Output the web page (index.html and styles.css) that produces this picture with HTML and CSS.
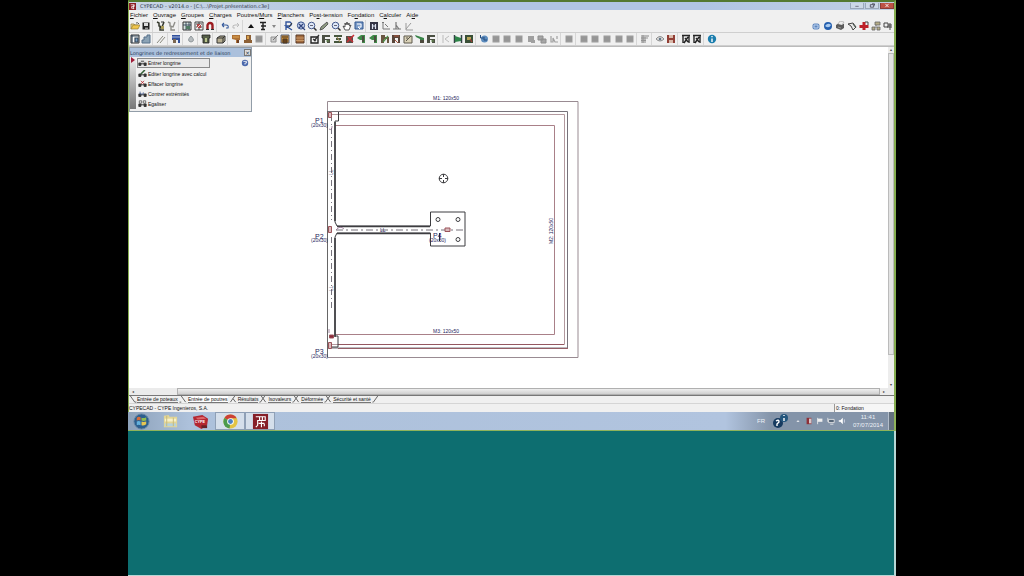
FILE: index.html
```html
<!DOCTYPE html>
<html lang="fr">
<head>
<meta charset="utf-8">
<title>CYPECAD</title>
<link rel="stylesheet" href="styles.css">
</head>
<body>
<svg class="defs" aria-hidden="true">
  <symbol id="open" viewBox="0 0 10 10"><path d="M1 8V3h3l1 1h3v1" fill="#f3dc8a" stroke="#8a7430" stroke-width=".7"/><path d="M1 8l2-4h7L8 8z" fill="#efc54c" stroke="#86702c" stroke-width=".6"/><path d="M6 2q2-1 3 1" fill="none" stroke="#555"/></symbol>
  <symbol id="save" viewBox="0 0 10 10"><path d="M1.500 1.500h7v7h-7z" fill="#222"/><path d="M3 2h4v3H3z" fill="#ddd"/><path d="M4 6.500h3v2H4z" fill="#999"/></symbol>
  <symbol id="plant" viewBox="0 0 10 10"><path d="M1 1l2 1v3l3 1 2-5M4 5v4h4" fill="none" stroke="#34382c" stroke-width="1.500"/><path d="M5 5h3v3H5z" fill="#a89a56"/><path d="M5 1h3" stroke="#333"/></symbol>
  <symbol id="plant2" viewBox="0 0 10 10"><path d="M1 1l2 1v3l3 1 2-5M4 5v4h4" fill="none" stroke="#8d8d88" stroke-width="1.400"/></symbol>
  <symbol id="grid" viewBox="0 0 10 10"><path d="M1 1h8v8H1z" fill="#d8e4e0" stroke="#333"/><path d="M1 4h8M4 1v8M7 1v8" stroke="#345" stroke-width=".9"/><path d="M4 5h4v3H4z" fill="#507c64"/></symbol>
  <symbol id="gridred" viewBox="0 0 10 10"><path d="M1 1h8v8H1z" fill="#eee" stroke="#444"/><path d="M2 3h6M2 6h6M5 1v8" stroke="#444"/><path d="M3 3h4v4H3z" fill="#b04444"/><path d="M3 7l4-4" stroke="#fff" stroke-width=".8"/></symbol>
  <symbol id="magnet" viewBox="0 0 10 10"><path d="M2.500 9V4.500a2.500 2.500 0 015 0V9" fill="none" stroke="#9c1c20" stroke-width="2.400"/><path d="M1 8.500h3M6 8.500h3" stroke="#333" stroke-width="1.200"/></symbol>
  <symbol id="undo" viewBox="0 0 10 10"><path d="M2 4h4q3 0 2 3H6M2 4l2-2M2 4l2 2" fill="none" stroke="#355a9c" stroke-width="1.100"/></symbol>
  <symbol id="redo" viewBox="0 0 10 10"><path d="M8 4H4Q1 4 2 7h2M8 4L6 2M8 4L6 6" fill="none" stroke="#bbb"/></symbol>
  <symbol id="up" viewBox="0 0 10 10"><path d="M2 7l3-4 3 4z" fill="#111"/></symbol>
  <symbol id="levels" viewBox="0 0 10 10"><path d="M2 1.500h6M3 5h5M3 8.500h4M5 1v8" stroke="#222" stroke-width="1.400"/></symbol>
  <symbol id="down" viewBox="0 0 10 10"><path d="M3 4h4L5 7z" fill="#888"/></symbol>
  <symbol id="zoomr" viewBox="0 0 10 10"><path d="M2 9V1h4q3 2 0 4H2l6 4" fill="none" stroke="#34569c" stroke-width="1.400"/><path d="M5 6l3-4" stroke="#333"/></symbol>
  <symbol id="zoom" viewBox="0 0 10 10"><circle cx="4.500" cy="4.500" r="3.300" fill="#dfe8f8" stroke="#44598c"/><path d="M7 7l2.500 2.500" stroke="#333" stroke-width="1.500"/><path d="M3 4.500h3" stroke="#667"/></symbol>
  <symbol id="zoomx" viewBox="0 0 10 10"><circle cx="5" cy="4.500" r="3.600" fill="#c8d5ef" stroke="#35508c"/><path d="M3 3l4 4M7 3L3 7M7 7l2 2" stroke="#33457c" stroke-width="1.200"/></symbol>
  <symbol id="pencil" viewBox="0 0 10 10"><path d="M1 9l1-3 6-5 1 2-5 5z" fill="#8f9c83" stroke="#444" stroke-width=".8"/></symbol>
  <symbol id="hand" viewBox="0 0 10 10"><path d="M3 9L1 5l2 1V2l1 2 1-3 1 3 1-2 .5 3L9 4 7 9z" fill="#fff" stroke="#333" stroke-width=".8"/></symbol>
  <symbol id="refresh" viewBox="0 0 10 10"><path d="M1 1h8v7H1z" fill="#7c9cc8" stroke="#31578f"/><path d="M3 3h4v3H4l2 2" fill="none" stroke="#fff"/></symbol>
  <symbol id="binoc" viewBox="0 0 10 10"><path d="M1 1h8v8H1z" fill="#334"/><path d="M3.500 3v5M6.500 3v5M3 5h4" stroke="#dfe4f2" stroke-width="1.200"/></symbol>
  <symbol id="axis" viewBox="0 0 10 10"><path d="M2 1v7h7M4 3l3 3M1 2l1-1 1 1" fill="none" stroke="#777"/></symbol>
  <symbol id="angle" viewBox="0 0 10 10"><path d="M1 8h8M4 1v7M4 4l3 4" fill="none" stroke="#777" stroke-width="1.200"/></symbol>
  <symbol id="diag" viewBox="0 0 10 10"><path d="M2 2v7h7M2 8l5-6" fill="none" stroke="#999"/></symbol>
  <symbol id="mail" viewBox="0 0 10 10"><rect x="1.500" y="2.500" width="7" height="6" rx="2" fill="#5f86bd"/><path d="M3 4h4v3H3z" fill="none" stroke="#bcd3f1"/></symbol>
  <symbol id="globe" viewBox="0 0 10 10"><circle cx="5" cy="5" r="4" fill="#245fae"/><path d="M2 5q3-4 6-1Q6 8 2 5" fill="#a9cbf0"/></symbol>
  <symbol id="print" viewBox="0 0 10 10"><path d="M1 4l3-2 5 1v4L6 9 1 7z" fill="#5c5c5c"/><path d="M3 3l2-3 4 1-2 3M3 6l3 1" fill="#eee" stroke="#aaa" stroke-width=".7"/></symbol>
  <symbol id="page" viewBox="0 0 10 10"><path d="M1 3l5-1 3 4-3 3-2-4z" fill="#e8e8e8" stroke="#444"/><path d="M6 3l3 4" stroke="#3e4e44"/></symbol>
  <symbol id="cross" viewBox="0 0 10 10"><path d="M3.500 1h3v3h3v3h-3v2h-3V7h-3V4h3z" fill="#bd2028"/><path d="M6 1h3v3" stroke="#444" fill="none"/></symbol>
  <symbol id="network" viewBox="0 0 10 10"><path d="M4 1h5v3H4zM1 6h3v3H1zM6 6h3v3H6zM5 4v3" fill="#b6ad86" stroke="#666" stroke-width=".8"/></symbol>
  <symbol id="windows" viewBox="0 0 10 10"><path d="M1 2h4v4H1zM4 6h5M7 2v7M5 4h4" fill="#eee" stroke="#444"/></symbol>
  <symbol id="table" viewBox="0 0 10 10"><path d="M1 1h8v8H1z" fill="#fff" stroke="#333"/><path d="M1 2h8M2 1v8M5 4h3v4H5z" fill="#7ba0c4" stroke="#345" stroke-width="1.200"/></symbol>
  <symbol id="stair" viewBox="0 0 10 10"><path d="M1 9V6h2V3h3V1h3v8z" fill="#8ba3b6" stroke="#56708a"/></symbol>
  <symbol id="line" viewBox="0 0 10 10"><path d="M1 9l6-7M4 9l5-6" stroke="#8b8b80"/></symbol>
  <symbol id="blue" viewBox="0 0 10 10"><path d="M1 1h8v8H7V6H1z" fill="#31509c"/><path d="M1 3h8" stroke="#c5d3ee" stroke-width=".8"/><path d="M2 5h3v4H2z" fill="#7b6750"/></symbol>
  <symbol id="drop" viewBox="0 0 10 10"><path d="M5 2q5 5 0 6-5-1 0-6" fill="#b7bcbf" stroke="#828a8e" stroke-width=".8"/></symbol>
  <symbol id="tee" viewBox="0 0 10 10"><path d="M1 1h8v3H8v5H2V4H1z" fill="#565f49" stroke="#222" stroke-width=".8"/><path d="M4 4h2v4H4z" fill="#b9c48b"/></symbol>
  <symbol id="cube" viewBox="0 0 10 10"><path d="M1 4l3-2h5v5L7 9H1z" fill="#b6ae91" stroke="#333"/><path d="M1 4h6v5M7 4l2-2" fill="none" stroke="#333"/></symbol>
  <symbol id="brown" viewBox="0 0 10 10"><path d="M1 1h8v5H7v3H5V6L1 5z" fill="#ad7134"/><path d="M2 3h6" stroke="#e1a852"/><path d="M6 6h2v3H6z" fill="#6b3c20"/></symbol>
  <symbol id="footing" viewBox="0 0 10 10"><path d="M3 1h5v5h1v3H1V6h2z" fill="#8d6035"/><path d="M4 2h2v3H4z" fill="#d8a24f"/></symbol>
  <symbol id="gray" viewBox="0 0 10 10"><path d="M1.500 1.500h7v7h-7z" fill="#9c9c9c"/><path d="M2 4h6M2 6h6" stroke="#8c8c8c" stroke-width=".6"/></symbol>
  <symbol id="graypen" viewBox="0 0 10 10"><path d="M2 3h5v5H2z" fill="#ccc" stroke="#929292"/><path d="M4 6l5-5" stroke="#777"/></symbol>
  <symbol id="home" viewBox="0 0 10 10"><path d="M1 1h8v8H1z" fill="#c88a36" stroke="#56627c"/><path d="M3 5h4v4H3zM2 3h6" fill="#68431f" stroke="#4d3b25"/></symbol>
  <symbol id="brick" viewBox="0 0 10 10"><path d="M1 1h8v8H1z" fill="#a36b3c" stroke="#5b3d2b"/><path d="M1 4h8M1 6.500h8" stroke="#d1a373" stroke-width=".8"/></symbol>
  <symbol id="cut" viewBox="0 0 10 10"><path d="M1 3h7v6H1z" fill="#f5f5f5" stroke="#222" stroke-width="1.400"/><path d="M4 7l5-6M3 5l3 2" stroke="#333" stroke-width="1.300"/></symbol>
  <symbol id="beam" viewBox="0 0 10 10"><path d="M1 1h8v2H4v2h5v4H6V6H4v3H1z" fill="#4b5043"/><path d="M5 7h3" stroke="#6b9254"/></symbol>
  <symbol id="beam2" viewBox="0 0 10 10"><path d="M1 1h8v2H1zM3 4h5v2H3zM1 7h8v2H1z" fill="#47573e"/><path d="M4 3l3 5" stroke="#a18c52"/></symbol>
  <symbol id="del" viewBox="0 0 10 10"><path d="M1 2h7v7H1z" fill="#585048"/><path d="M2 8l7-7M3 3l5 5" stroke="#c52f35" stroke-width="1.600"/></symbol>
  <symbol id="green" viewBox="0 0 10 10"><path d="M1 4l4-3h4v8H6V6H4z" fill="#3f8a48"/><path d="M6 2h2v6H6z" fill="#4a4f3e"/></symbol>
  <symbol id="greenl" viewBox="0 0 10 10"><path d="M0 1l9 3v2H7v3H5V5L1 3z" fill="#388348"/><path d="M5 6h4v3H5z" fill="#4c493c"/></symbol>
  <symbol id="mix" viewBox="0 0 10 10"><path d="M1 1h4v2h4v6H7V5H4v4H1z" fill="#6a5742"/><path d="M3 8l5-6" stroke="#4d8b47" stroke-width="1.300"/></symbol>
  <symbol id="mixr" viewBox="0 0 10 10"><path d="M1 1h8v8H7V4H4v5H1z" fill="#584539"/><path d="M4 6l3 3M3 2h5" stroke="#b05a43"/></symbol>
  <symbol id="note" viewBox="0 0 10 10"><path d="M1 2h8v7H1z" fill="#d9d1b7" stroke="#5c584c"/><path d="M3 7l5-5M3 4h2" stroke="#5c584c"/></symbol>
  <symbol id="kite" viewBox="0 0 10 10"><path d="M2 1v8M8 2L4 5l4 3" fill="none" stroke="#bcbcbc"/></symbol>
  <symbol id="flagg" viewBox="0 0 10 10"><path d="M1.500 1v8M8.500 1v8" stroke="#344" stroke-width="1.500"/><path d="M2 2l6 2v3L2 8z" fill="#2e8549"/></symbol>
  <symbol id="screen" viewBox="0 0 10 10"><path d="M1 1h8v8H1z" fill="#3a5037"/><path d="M3 3h4v3H3z" fill="#b5a558"/><path d="M6 5l2 3" stroke="#b33"/></symbol>
  <symbol id="back" viewBox="0 0 10 10"><circle cx="5.500" cy="5" r="3.500" fill="#5b8bbd"/><path d="M1.500 1v3h3M5 3v3h3" fill="none" stroke="#274e80"/></symbol>
  <symbol id="gcopy" viewBox="0 0 10 10"><path d="M1 2h5v4H1zM4 5h5v4H4z" fill="#a6a6a6" stroke="#8e8e8e"/></symbol>
  <symbol id="gcorner" viewBox="0 0 10 10"><path d="M2 2h6v4h1v3H5V8H2z" fill="#a0a0a0"/></symbol>
  <symbol id="glist" viewBox="0 0 10 10"><path d="M1 1h8v2H6v6H1z" fill="#bbb"/><path d="M3 1v8M1 4h7M1 6.500h5" stroke="#939393"/></symbol>
  <symbol id="gtext" viewBox="0 0 10 10"><path d="M2 2v6h2V4l2 4h3M8 2v3" fill="none" stroke="#a0a0a0" stroke-width="1.200"/></symbol>
  <symbol id="eye" viewBox="0 0 10 10"><path d="M1 5q4-5 8 0-4 4-8 0z" fill="#e0e0e0" stroke="#8b8b8b"/><circle cx="5" cy="5" r="1.300" fill="#647888"/></symbol>
  <symbol id="redsave" viewBox="0 0 10 10"><path d="M1 1h2v3h4V1h2v8H7V6H3v3H1z" fill="#923f36"/><path d="M3 1h4v3H3zM3 6h4v3H3z" fill="#d9b9aa"/><path d="M1 5h8" stroke="#923f36" stroke-width="2"/></symbol>
  <symbol id="find" viewBox="0 0 10 10"><path d="M1 1.500h8M2 1v8M8 1v8M3 9l4-6M4 4l3 4" fill="none" stroke="#252525" stroke-width="1.400"/></symbol>
  <symbol id="info" viewBox="0 0 10 10"><circle cx="5" cy="5" r="4.200" fill="#1c7eae"/><path d="M5 2v1.300M5 4.500v3.500" stroke="#fff" stroke-width="1.400"/></symbol>
  <symbol id="lg" viewBox="0 0 10 10"><path d="M0 5h3v3H0zM7 5h3v3H7zM3 6h4" fill="#333" stroke="#333" stroke-width="1.200"/></symbol>
</svg>

<div class="desktop">
  <main class="window">
    <header class="titlebar">
      <svg class="appicon" viewBox="0 0 8 8" aria-hidden="true"><path d="M0 0h8v8H0z" fill="#8c1d24"/><path d="M2 2h4v2H3v2h3M5 2v5" fill="none" stroke="#fff" stroke-width=".8"/></svg>
      <h1 class="title">CYPECAD - v2014.o - [C:\...\Projet.présentation.c3e]</h1>
      <div class="winbtns">
        <button class="winbtn" aria-label="Réduire"><svg viewBox="0 0 12 6"><path d="M4 4h4" stroke="#667"/></svg></button>
        <button class="winbtn" aria-label="Restaurer"><svg viewBox="0 0 12 6"><path d="M4 2h4v3H4zM6 1h3v2" fill="none" stroke="#445"/></svg></button>
        <button class="winbtn close" aria-label="Fermer"><svg viewBox="0 0 12 6"><path d="M4 1l4 4M8 1L4 5" stroke="#fff"/></svg></button>
      </div>
    </header>
    <nav class="menu">
      <button><u>F</u>ichier</button><button><u>O</u>uvrage</button><button><u>G</u>roupes</button><button><u>C</u>harges</button><button>Poutres/<u>M</u>urs</button><button><u>P</u>lanchers</button><button>Po<u>s</u>t-tension</button><button>Fo<u>n</u>dation</button><button>C<u>a</u>lculer</button><button>Ai<u>d</u>e</button>
    </nav>
    <div class="toolbar">
      <div class="tools" data-icons="open save|plant plant2|grid gridred magnet|undo redo|up levels down|zoomr zoomx zoom pencil zoom hand refresh|binoc axis angle diag"></div>
      <div class="tools" data-icons="mail globe print page cross network windows"></div>
    </div>
    <div class="toolbar">
      <div class="tools" data-icons="table stair|line|blue|drop|tee|cube|brown footing gray|graypen home|brick|cut beam beam2 del green green mix mixr note greenl beam|kite flagg screen|back gray gray gray gcorner gcopy gtext|gray|gray gray gray gray gray|glist|eye redsave|find find|info"></div>
    </div>

    <section class="workspace">
      <div class="view">
        <svg class="plan" viewBox="129 47 759 341" role="img" aria-label="Plan de fondation">
          <g fill="none" stroke="#998b92">
            <path d="M327.500 357.500v-256h250.500v256z"/>
            <path d="M335 125.500h219.500v209H335" stroke="#a98088"/>
            <path d="M328 111.500h239.500v236.500H328" stroke="#77737b"/>
            <path d="M328 114.500h236.500v230H328" stroke="#b39a9f"/>
          </g>
          <path d="M338 348.500h230M338 344.500h226" stroke="#8b4651" stroke-width=".8"/>
          <g fill="none" stroke="#3d3d40">
            <path d="M327.500 111v246" stroke="#666"/>
            <path d="M338.500 112v9h-3.500v101l2 4H430.500v-14h34.500v34h-34.500v-13H337l-2 4v99h3v11H328"/>
            <path d="M335 122v99M335 238v99" stroke-width="1.600"/>
            <path d="M337 226.500h93M337 233.500h93" stroke-width="1.300"/>
            <path d="M331.500 115v105M331.500 237v72" stroke="#77747e" stroke-dasharray="6 3 1 3"/>
            <path d="M336 230h128" stroke="#76717a" stroke-dasharray="7 3 2 3"/>
            <circle cx="443.500" cy="178.500" r="4.300"/>
            <path d="M443.500 174v3M443.500 180v3M439 178.500h3M445 178.500h3"/>
            <circle cx="438" cy="219.500" r="2"/><circle cx="458" cy="219.500" r="2"/><circle cx="458" cy="239.500" r="2"/>
          </g>
          <g fill="#d9babb" stroke="#9b535a">
            <path d="M328.500 112.500h3v5h-3zM328.500 226.500h3v6h-3zM328.500 342.500h3v6h-3zM445 228h5v3.500h-5z"/>
            <path d="M329.500 335h4v3h-4z" fill="#8d2938"/>
          </g>
          <path d="M336 230q4-5 8-1M329 129q3 2 3-3M329 333v-4" fill="none" stroke="#926e91" stroke-width=".8"/>
          <path d="M439.500 233v8" stroke="#222"/>
          <g class="lbl">
            <text x="433" y="100">M1: 120x50</text>
            <text x="433" y="333">M3: 120x50</text>
            <text transform="translate(553 244) rotate(-90)">M2: 120x50</text>
            <text x="311" y="127">(20x30)</text><text x="311" y="242">(20x30)</text><text x="311" y="358">(20x30)</text>
            <text x="429" y="242">(20x30)</text>
            <text x="380" y="232">LL</text>
            <text transform="translate(333 175) rotate(-90)">LL</text><text transform="translate(333 291) rotate(-90)">LL</text>
          </g>
          <g class="lbl big"><text x="315" y="123">P1</text><text x="315" y="239">P2</text><text x="315" y="354">P3</text><text x="433" y="238">P4</text></g>
        </svg>
        <aside class="palette">
          <h2 class="palhead"><span>Longrines de redressement et de liaison</span><button class="palclose" aria-label="Fermer la palette">×</button></h2>
          <div class="palbody">
            <div class="rail"><svg viewBox="0 0 6 6" aria-hidden="true"><path d="M1 0l4 3-4 3z" fill="#a01c38"/></svg></div>
            <div class="pallist">
              <button class="on"><svg viewBox="0 0 10 10"><use href="#lg"/><path d="M3 2h4v2H3z" fill="#777"/></svg>Entrer longrine</button>
              <button><svg viewBox="0 0 10 10"><use href="#lg"/><path d="M3 5l5-5" stroke="#386339" stroke-width="2"/></svg>Editer longrine avec calcul</button>
              <button><svg viewBox="0 0 10 10"><use href="#lg"/><path d="M3 1l4 4M7 1L3 5" stroke="#b4242c"/></svg>Effacer longrine</button>
              <button><svg viewBox="0 0 10 10"><use href="#lg"/><path d="M2 2v3h4V3" fill="none" stroke="#3c5488"/></svg>Contrer extrémités</button>
              <button><svg viewBox="0 0 10 10"><use href="#lg"/><path d="M1 1h3v3H1zM6 1h3v3H6z" fill="none" stroke="#555"/></svg>Egaliser</button>
            </div>
            <button class="help" aria-label="Aide"><svg viewBox="0 0 10 10"><circle cx="5" cy="5" r="4" fill="#4a68ac"/><path d="M3 3h4v2H5v2" fill="none" stroke="#fff"/></svg></button>
          </div>
        </aside>
      </div>
      <div class="vscroll"><span>▴</span><i></i><span>▾</span></div>
    </section>
    <div class="hscroll"><span>◂</span><i></i><span>▸</span></div>
    <div class="tabs">
      <svg viewBox="0 0 8 8"><path d="M1 0l5 7h2"/></svg>
      <button>Entrée de poteaux</button>
      <svg viewBox="0 0 8 8"><path d="M0 7h2M2 0l5 7"/></svg>
      <button class="on">Entrée de poutres</button>
      <svg viewBox="0 0 8 8"><path d="M1 7l5-7M4 3l3 4"/></svg>
      <button>Résultats</button>
      <svg viewBox="0 0 8 8"><path d="M0 7h1l5-7M2 0l5 7"/></svg>
      <button>Isovaleurs</button>
      <svg viewBox="0 0 8 8"><path d="M0 7h1l5-7M2 0l5 7"/></svg>
      <button>Déformée</button>
      <svg viewBox="0 0 8 8"><path d="M0 7h1l5-7M2 0l5 7"/></svg>
      <button>Sécurité et santé</button>
      <svg viewBox="0 0 8 8"><path d="M0 7h1l5-7"/></svg>
    </div>
    <footer class="status"><span>CYPECAD - CYPE Ingenieros, S.A.</span><span class="level">0: Fondation</span></footer>
  </main>

  <div class="taskbar">
    <button class="task" aria-label="Démarrer"><svg viewBox="0 0 18 18"><circle cx="9" cy="9" r="8" fill="#2c5f8f" stroke="#6687a4"/><path d="M4 5q2-2 4-.500V8q-2-1-4 0z" fill="#d86c38"/><path d="M9 5q2 1 5-.500V8q-3 1-5 0z" fill="#91bd50"/><path d="M4 9q2-1 4 0v4q-2-1-4 0z" fill="#64b2dc"/><path d="M9 9q2 1 5 0v3q-3 2-5 1z" fill="#e5c653"/></svg></button>
    <button class="task" aria-label="Explorateur"><svg viewBox="0 0 18 18"><path d="M2 3l5-1 1 2h8v11H2z" fill="#e2d596"/><path d="M3 6h12v3H3z" fill="#f8f1c9"/><path d="M3 11h12v3H3z" fill="#b6d2dc"/><path d="M5 3v11M12 5v9" stroke="#c6b978"/></svg></button>
    <button class="task" aria-label="CYPE"><svg viewBox="0 0 18 18"><path d="M1 4l10-2 6 4-1 7-6 4-7-4z" fill="#b32630"/><path d="M4 5l8-1 3 2-9 1z" fill="#dc666a"/><path d="M10 13h6v3h-6z" fill="#682026"/><text x="3" y="11" class="logo">CYPE</text></svg></button>
    <button class="task open" aria-label="Chrome"><svg viewBox="0 0 18 18"><circle cx="9" cy="9" r="7.500" fill="#e3c444"/><path d="M9 9L2.500 5.300A7.500 7.500 0 0115.500 5.500H9z" fill="#cc4136"/><path d="M9 9L2.500 5.300A7.500 7.500 0 008 16.500z" fill="#4b9a4d"/><circle cx="9" cy="9" r="3.500" fill="#fff"/><circle cx="9" cy="9" r="2.600" fill="#4d83c1"/></svg></button>
    <button class="task open" aria-label="CYPECAD"><svg viewBox="0 0 18 18"><path d="M1 1h16v16H1z" fill="#861f28"/><path d="M4 4h10v4H6v5l-2 2M8 4v4M11 4v4M7 11h6M10 9v6M13 11v3" fill="none" stroke="#fff" stroke-width="1.200"/></svg></button>
    <div class="tray">
      <span class="lang">FR</span>
      <svg class="assist" viewBox="0 0 16 16"><circle cx="6" cy="10" r="5" fill="#173b60"/><circle cx="12" cy="5" r="4" fill="#24567d"/><path d="M4 8q3-2 3 1l-2 2v2M12 2v1M12 5v3" fill="none" stroke="#fff" stroke-width="1.400"/></svg>
      <svg viewBox="0 0 10 10"><path d="M3 6l2-2 2 2z" fill="#fff"/></svg>
      <svg viewBox="0 0 10 10"><path d="M2 1h6v8H2z" fill="#8e3038"/><path d="M5 2h3v6H5z" fill="#d7c6c8"/></svg>
      <svg viewBox="0 0 10 10"><path d="M2 1v8" stroke="#eee"/><path d="M2 2h6v4H2z" fill="#eee"/></svg>
      <svg viewBox="0 0 10 10"><path d="M2 3h7v4H2zM4 9h4M1 1v5" fill="#566678" stroke="#eee"/></svg>
      <svg viewBox="0 0 10 10"><path d="M1 4h2l3-3v8L3 6H1z" fill="#fff"/><path d="M8 3v4" stroke="#dde"/></svg>
      <div class="clock"><time>11:41</time><time>07/07/2014</time></div>
      <button class="peek" aria-label="Afficher le bureau"></button>
    </div>
  </div>
  <div class="backdrop"></div>
</div>
<script src="toolbar.js"></script>
</body>
</html>
```
FILE: styles.css
```css
* { box-sizing: border-box; }
body { margin: 0; background: #000; font-family: "Liberation Sans", Arial, sans-serif; font-size: 6px; color: #111; }
button { margin: 0; padding: 0; border: 0; background: none; font: inherit; color: inherit; white-space: nowrap; }
svg { display: block; }
.defs { display: none; }

.desktop { width: 75%; min-height: 100vh; margin: 0 auto; display: flex; flex-direction: column; background: #0d6e70; }
.window { display: flex; flex-direction: column; background: #f0f0f0; border: 1px solid #86ad50; border-top: 2px solid #53792f; border-right-width: 2px; border-bottom: 0; }

.titlebar { display: flex; align-items: center; gap: 4px; height: 8px; background: linear-gradient(90deg, #c9d6e6, #b0c5e2 35%, #b0c5e2 75%, #c0cfe2); }
.appicon { width: 7px; height: 7px; }
.title { margin: 0; flex: 1; font: 5px/8px "DejaVu Sans", sans-serif; color: #2c3746; white-space: nowrap; }
.winbtns { display: flex; gap: 1px; }
.winbtn { width: 14px; height: 6px; background: #ccd8e6; border: 1px solid #9aa8b9; border-top: 0; }
.winbtn svg { width: 100%; height: 100%; }
.winbtn.close { background: #bd5245; border-color: #8d3c37; }

.menu { display: flex; gap: 5px; height: 10px; padding-left: 1px; align-items: center; }
.menu button { line-height: 8px; }
.toolbar { display: flex; height: 13px; align-items: center; justify-content: space-between; border-bottom: 1px solid #cfcfcf; }
.tools { display: flex; }
.group { display: flex; align-items: center; height: 12px; }
.group + .group { padding-left: 2px; border-left: 1px solid #d6d6d6; }
.group button { flex: 1; display: flex; justify-content: center; }
.group svg { width: 10px; height: 10px; }
.n1 { width: 12px; }
.n2 { width: 23px; }
.n7 { width: 84px; }
.group + .n1 { width: 15px; }
.group + .n2 { width: 26px; }
.group + .n3 { width: 38px; }
.group + .n4 { width: 50px; }
.group + .n5 { width: 61px; }
.group + .n7 { width: 85px; }
.group + .n11 { width: 131px; }

.workspace { display: flex; background: #fff; border-top: 1px solid #bbb; }
.view { position: relative; flex: 1; }
.plan { width: 100%; height: auto; }
.lbl { font-size: 5px; fill: #25255c; }
.lbl.big { font-size: 7px; }
.vscroll { width: 6px; display: flex; flex-direction: column; align-items: center; background: #ededed; font-size: 4px; line-height: 6px; color: #444; }
.vscroll i { flex: 1; width: 6px; margin-bottom: 27px; background: #e2e2e2; border: 1px solid #bbb; }
.hscroll { display: flex; align-items: center; height: 7px; padding-right: 6px; background: #ebebeb; font-size: 4px; line-height: 7px; color: #444; }
.hscroll span { width: 8px; text-align: center; }
.hscroll i { flex: 1; height: 7px; margin-left: 40px; background: linear-gradient(#eee, #cfcfcf); border: 1px solid #b0b0b0; }

.palette { position: absolute; left: 0; top: 0; width: 123px; background: #f0f0f0; border: 1px solid #929da8; }
.palhead { display: flex; align-items: center; justify-content: space-between; margin: 0; height: 9px; font: 5px/8px "DejaVu Sans", sans-serif; color: #263a54; background: #abc0dc; }
.palclose { width: 7px; height: 7px; border: 1px solid #777; background: #ddd; font-size: 6px; line-height: 5px; }
.palbody { display: flex; padding-bottom: 2px; }
.rail { width: 6px; background: linear-gradient(#f0f0f0, #777); }
.rail svg { width: 6px; height: 6px; }
.pallist { flex: 1; display: flex; flex-direction: column; align-items: flex-start; gap: 1px; padding: 1px; font-size: 5px; }
.pallist button { display: flex; align-items: center; gap: 1px; height: 9px; border: 1px solid transparent; }
.pallist svg { width: 9px; height: 8px; }
.pallist .on { width: 73px; height: 10px; border-color: #8a8a8a; background: #e9e9e9; }
.help { align-self: flex-start; padding: 2px; }
.help svg { width: 8px; height: 8px; }

.tabs { display: flex; height: 8px; font-size: 5px; line-height: 7px; border-top: 1px solid #777; }
.tabs svg { width: 10px; height: 7px; fill: none; stroke: #555; }
.tabs svg:first-child { width: 8px; }
.tabs button { border-bottom: 1px solid #777; line-height: 6px; height: 7px; }
.tabs .on { background: #fff; }
.status { display: flex; justify-content: space-between; height: 9px; font-size: 5px; line-height: 8px; border-top: 1px solid #d5d5d5; }
.level { width: 60px; padding-left: 1px; border-left: 1px solid #999; background: #f6f6f6; }

.taskbar { display: flex; height: 19px; background: linear-gradient(90deg, #8da2ba, #adc1db 8%, #b1c4df 78%, #8494a9 84%); border-bottom: 1px solid #8fb35a; border-right: 2px solid #8fb35a; }
.task { width: 30px; display: flex; align-items: center; justify-content: center; }
.task:first-child { width: 27px; }
.task svg { width: 17px; height: 17px; }
.task.open { background: #d5dfeb; border: 1px solid #8fa0b6; }
.logo { font-size: 4px; font-weight: bold; fill: #fff; }
.tray { margin-left: auto; display: flex; align-items: center; gap: 3px; color: #eef2f7; }
.tray svg { width: 8px; height: 8px; }
.tray .assist { width: 16px; height: 16px; margin: 0 3px 0 4px; }
.clock { display: flex; flex-direction: column; align-items: center; margin-left: 4px; line-height: 8px; }
.peek { width: 6px; height: 18px; margin-left: 2px; background: #64717f; border-left: 1px solid #b2bdca; }
.backdrop { flex: 1; background: #0d6e70; border-right: 2px solid #b6d6d4; border-bottom: 1px solid #b6d6d4; }
```
FILE: toolbar.js
```js
document.querySelectorAll('[data-icons]').forEach(function (bar) {
  bar.innerHTML = bar.dataset.icons.split('|').map(function (group) {
    var names = group.split(' ');
    return '<div class="group n' + names.length + '">' + names.map(function (name) {
      return '<button aria-label="' + name + '"><svg><use href="#' + name + '"/></svg></button>';
    }).join('') + '</div>';
  }).join('');
});
```
